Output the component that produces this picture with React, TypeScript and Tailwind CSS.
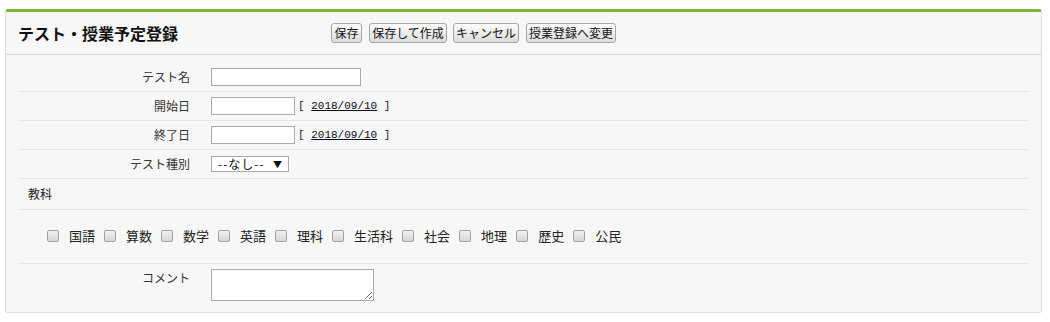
import React from "react";

const subjects = ["国語", "算数", "数学", "英語", "理科", "生活科", "社会", "地理", "歴史", "公民"];

function Btn({ w, children, ml }: { w: string; children: React.ReactNode; ml: string }) {
  return (
    <div
      className={`${w} ${ml} h-[20px] flex items-center justify-center border border-[#a6a6a6] rounded-[3px] bg-gradient-to-b from-[#fdfdfd] to-[#dcdcdc] text-[12px] leading-none text-[#111] shrink-0`}
    >
      {children}
    </div>
  );
}

function DateLink() {
  return (
    <span className="ml-[3px] font-['Liberation_Mono',monospace] text-[11px] text-[#222] whitespace-pre leading-none">
      {"[ "}
      <span className="underline text-[#0a0a1a]">2018/09/10</span>
      {" ]"}
    </span>
  );
}

export default function App() {
  return (
    <div className="w-[1050px] h-[322px] bg-white pt-[9px] pl-[5px] font-['Noto_Sans_CJK_JP',sans-serif] text-[#333]">
      <div className="w-[1037px] border border-[#dedede] border-t-[3px] border-t-[#7db63b] rounded-[3px] bg-[#f7f7f7]">
        {/* header */}
        <div className="h-[43px] flex items-center pl-[12px] border-b border-[#d6d6d6]">
          <div className="w-[313px] shrink-0 text-[16px] font-bold text-[#111] leading-none">テスト・授業予定登録</div>
          <Btn w="w-[31px]" ml="">保存</Btn>
          <Btn w="w-[78px]" ml="ml-[7px]">保存して作成</Btn>
          <Btn w="w-[66px]" ml="ml-[6px]">キャンセル</Btn>
          <Btn w="w-[90px]" ml="ml-[7px]">授業登録へ変更</Btn>
        </div>
        {/* body */}
        <div className="px-[12px] pt-[8px] pb-[11px]">
          <div className="h-[28px] flex items-center border-b border-[#e6e6e6] box-content">
            <div className="w-[172px] text-right text-[12px] leading-none">テスト名</div>
            <div className="ml-[21px] w-[150px] h-[18px] border border-[#a9a9a9] bg-white" />
          </div>
          <div className="h-[28px] flex items-center border-b border-[#e6e6e6] box-content">
            <div className="w-[172px] text-right text-[12px] leading-none">開始日</div>
            <div className="ml-[21px] w-[84px] h-[18px] border border-[#a9a9a9] bg-white" />
            <DateLink />
          </div>
          <div className="h-[28px] flex items-center border-b border-[#e6e6e6] box-content">
            <div className="w-[172px] text-right text-[12px] leading-none">終了日</div>
            <div className="ml-[21px] w-[84px] h-[18px] border border-[#a9a9a9] bg-white" />
            <DateLink />
          </div>
          <div className="h-[28px] flex items-center border-b border-[#e6e6e6] box-content">
            <div className="w-[172px] text-right text-[12px] leading-none">テスト種別</div>
            <div className="ml-[21px] w-[78px] h-[16px] border border-[#a9a9a9] bg-white flex items-center pl-[6px] pr-[6px] text-[12px] leading-none text-[#111]">
              <span className="tracking-[1px]">--なし--</span>
              <span className="ml-auto text-[9px] leading-none">▼</span>
            </div>
          </div>
          <div className="h-[30px] flex items-center border-b border-[#e6e6e6] box-content">
            <div className="pl-[10px] text-[12px] leading-none text-[#222]">教科</div>
          </div>
          <div className="h-[51px] flex items-center border-b border-[#e6e6e6] box-content pl-[29px] pb-[2px]">
            {subjects.map((s) => (
              <div key={s} className="flex items-center">
                <span className="w-[12px] h-[12px] border border-[#a0a0a0] rounded-[2px] bg-gradient-to-b from-[#f2f2f2] to-[#d6d6d6]" />
                <span className="ml-[10px] mr-[9px] text-[13px] leading-none text-[#222]">{s}</span>
              </div>
            ))}
          </div>
          <div className="flex items-start pt-[5px]">
            <div className="w-[172px] text-right text-[12px] leading-[18px]">コメント</div>
            <textarea className="ml-[21px] w-[163px] h-[32px] border border-[#a9a9a9] bg-white resize block" />
          </div>
        </div>
      </div>
    </div>
  );
}
